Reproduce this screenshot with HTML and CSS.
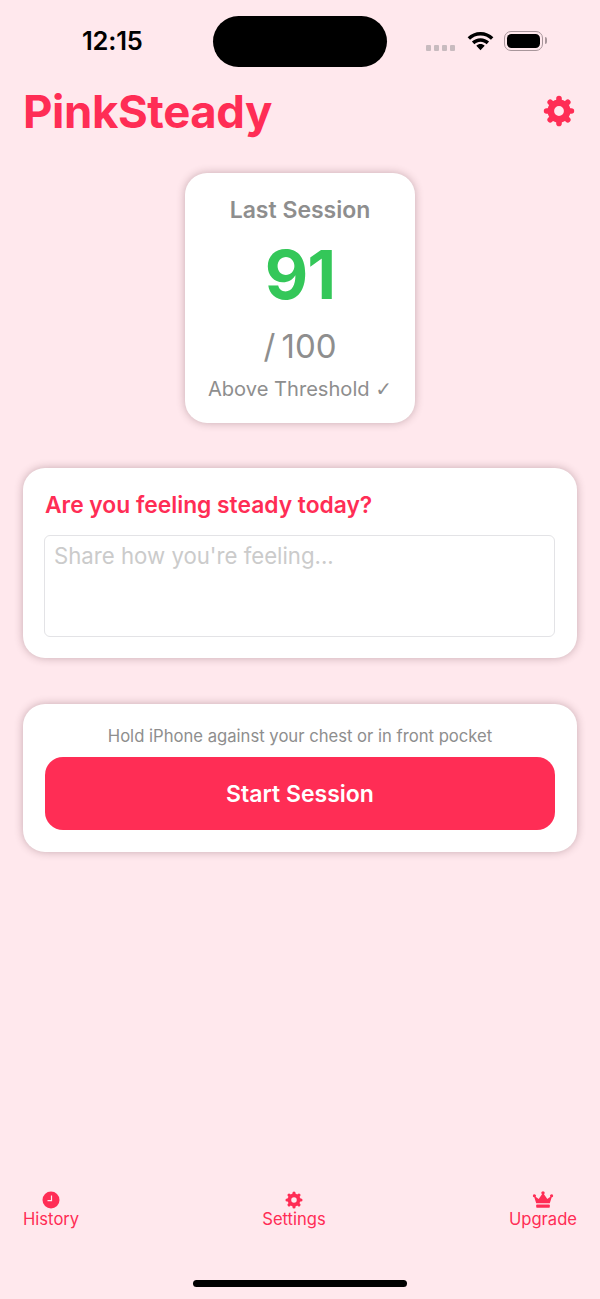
FILE: index.html
```html
<!DOCTYPE html>
<html lang="en">
<head>
<meta charset="utf-8">
<title>PinkSteady</title>
<link rel="stylesheet" href="styles.css">
</head>
<body>
<svg class="defs" width="0" height="0" aria-hidden="true">
  <symbol id="gear" viewBox="0 0 32 32">
    <circle cx="16" cy="16" r="8.2" fill="none" stroke="currentColor" stroke-width="6.6"/>
    <g stroke="currentColor" stroke-width="5.6" stroke-linecap="round">
      <path d="M16 3.6V7M16 25v3.400M3.600 16H7M25 16h3.400M7.200 7.200l2.400 2.400M22.400 22.400l2.400 2.400M24.800 7.200l-2.400 2.400M9.600 22.400l-2.400 2.400"/>
    </g>
  </symbol>
</svg>
<div class="app">
  <div class="status">
    <span class="time">12:15</span>
    <span class="island"></span>
    <div class="status-right">
      <span class="dots"><i></i><i></i><i></i><i></i></span>
      <svg class="wifi" viewBox="0 0 26 20">
        <path d="M13 4.200c3.700 0 7 1.400 9.500 3.800l2.200-2.400C21.600 2.600 17.500.8 13 .8S4.400 2.600 1.300 5.600L3.500 8C6 5.600 9.300 4.200 13 4.200z"/>
        <path d="M13 9.800c2.200 0 4.100.8 5.600 2.200l2.200-2.400C18.700 7.600 16 6.500 13 6.500S7.300 7.600 5.200 9.600L7.400 12c1.500-1.400 3.400-2.200 5.600-2.200z"/>
        <path d="M13 11.800c-1.500 0-2.800.6-3.800 1.500L13 17.400l3.800-4.100c-1-.9-2.300-1.500-3.800-1.500z"/>
      </svg>
      <span class="battery"><span class="battery-fill"></span></span>
      <span class="battery-cap"></span>
    </div>
  </div>

  <header class="header">
    <h1 class="title">PinkSteady</h1>
    <svg class="gear-big"><use href="#gear"/></svg>
  </header>

  <main class="main">
    <section class="card score-card">
      <div class="score-label">Last Session</div>
      <div class="score-value">91</div>
      <div class="score-max">/ 100</div>
      <div class="score-note">Above Threshold <span class="check">✓</span></div>
    </section>

    <section class="card wide-card feel-card">
      <h2 class="feel-title">Are you feeling steady today?</h2>
      <div class="feel-input">Share how you're feeling...</div>
    </section>

    <section class="card wide-card start-card">
      <p class="hint">Hold iPhone against your chest or in front pocket</p>
      <div class="start-button">Start Session</div>
    </section>
  </main>

  <nav class="tabs">
    <div class="tab">
      <svg class="tab-icon" viewBox="0 0 18 18">
        <circle cx="9" cy="9" r="8.500" fill="currentColor"/>
        <path d="M9.500 4.500V9.700H5.500" fill="none" stroke="#ffe8ed" stroke-width="1.200"/>
      </svg>
      <span>History</span>
    </div>
    <div class="tab">
      <svg class="tab-icon"><use href="#gear"/></svg>
      <span>Settings</span>
    </div>
    <div class="tab">
      <svg class="tab-icon crown" viewBox="0 0 22 18">
        <path fill="currentColor" d="M4.200 12.200 2.300 6.300a1.500 1.500 0 1 1 1.300-.6L6.700 8 10 3.200a1.600 1.600 0 1 1 2 0L15.300 8l3.100-2.300a1.500 1.500 0 1 1 1.300.6l-1.900 5.900z"/>
        <rect x="4.200" y="13.500" width="13.600" height="3.300" rx=".8" fill="currentColor"/>
      </svg>
      <span>Upgrade</span>
    </div>
  </nav>

  <div class="home-row"><span class="home-bar"></span></div>
</div>
</body>
</html>
```

FILE: styles.css
```css
* { box-sizing: border-box; }
html, body { margin: 0; padding: 0; }
body { background: #ffe8ed; font-family: Inter, "Liberation Sans", sans-serif; color: #ff2d55; }
.defs { position: absolute; }
.app { height: 1299px; display: flex; flex-direction: column; overflow: hidden; }

.status { height: 67px; padding-top: 16px; position: relative; display: flex; }
.time { position: absolute; left: 82px; top: 27px; font-size: 25.5px; line-height: 28px; font-weight: 600; color: #000; letter-spacing: -.2px; }
.island { width: 174px; height: 51px; margin: 0 auto; border-radius: 26px; background: #000; }
.status-right { position: absolute; left: 426px; top: 29px; display: flex; align-items: flex-start; height: 22px; }
.dots { display: flex; gap: 3px; margin-top: 16px; }
.dots i { width: 5px; height: 6px; background: #c8bbbf; border-radius: 1px; }
.wifi { width: 29px; height: 22px; fill: #000; margin-left: 11px; margin-top: 2px; }
.battery { width: 39px; height: 20px; margin-left: 9px; margin-top: 2px; border: 1.500px solid #a8969b; border-radius: 7px; padding: 2px; display: block; }
.battery-fill { display: block; height: 100%; background: #000; border-radius: 4.500px; }
.battery-cap { width: 2px; height: 7px; margin-top: 8px; margin-left: 2px; background: #a8969b; border-radius: 0 2px 2px 0; }

.header { height: 68px; padding: 20px 25px 0 23px; display: flex; justify-content: space-between; align-items: flex-start; }
.title { margin: 0; font-size: 45.500px; line-height: 50px; font-weight: 700; letter-spacing: -.4px; color: #ff2d55; }
.gear-big { width: 32px; height: 32px; margin-top: 8px; color: #ff2d55; }

.main { display: flex; flex-direction: column; align-items: center; padding-top: 38px; flex: 1; }
.card { background: #fff; border-radius: 22px; box-shadow: 0 0 9px rgba(80, 40, 50, .32); }
.score-card { width: 230px; height: 250px; padding-top: 23px; display: flex; flex-direction: column; align-items: center; color: #8e8e8e; }
.score-label { font-size: 23px; line-height: 28px; font-weight: 600; }
.score-value { font-size: 67px; line-height: 80px; font-weight: 700; color: #34c759; margin-top: 11px; letter-spacing: -1px; }
.score-max { font-size: 33px; line-height: 42px; margin-top: 10px; font-weight: 400; word-spacing: -3px; }
.score-note { font-size: 20.100px; line-height: 24px; margin-top: 10px; white-space: nowrap; }
.check { font-family: "DejaVu Sans", sans-serif; }

.wide-card { width: 554px; }
.feel-card { margin-top: 45px; height: 190px; padding: 23px 22px 0; }
.feel-title { margin: 0; font-size: 22.800px; line-height: 28px; font-weight: 600; color: #ff2d55; }
.feel-input { margin: 16px 0 0 -1px; height: 102px; border: 1px solid #e3e3e6; border-radius: 6px; padding: 6px 9px; font-size: 22.200px; line-height: 28px; color: #cbcbcb; }

.start-card { margin-top: 46px; height: 148px; padding: 21px 22px 0; text-align: center; }
.hint { margin: 0; font-size: 16.650px; line-height: 22px; color: #8e8e8e; }
.start-button { margin-top: 10px; height: 73px; border-radius: 18px; background: #ff2d55; color: #fff; font-size: 23px; font-weight: 600; line-height: 75px; }

.tabs { display: flex; justify-content: space-between; padding: 0 23px; height: 60px; }
.tab { display: flex; flex-direction: column; align-items: center; font-size: 16.600px; line-height: 20px; color: #ff2d55; }
.tab-icon { width: 18px; height: 18px; margin-top: 1px; }
.tab-icon.crown { width: 22px; }

.home-row { height: 49px; padding-top: 30px; display: flex; justify-content: center; }
.home-bar { width: 214px; height: 7px; border-radius: 4px; background: #000; }
```
